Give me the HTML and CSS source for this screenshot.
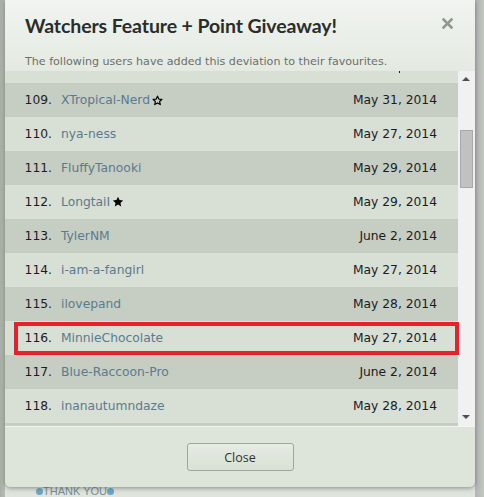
FILE: index.html
```html
<!DOCTYPE html>
<html>
<head>
<meta charset="utf-8">
<link rel="stylesheet" href="styles.css">
</head>
<body>
<div class="page">
  <div class="dialog">
    <div class="header">
      <h1 class="title">Watchers Feature + Point Giveaway!</h1>
      <svg class="close-x" width="11" height="11" viewBox="0 0 11 11"><path d="M1.5 1.5 L9.5 9.5 M9.5 1.5 L1.5 9.5" stroke="#8d9a8c" stroke-width="2.6" stroke-linecap="square"/></svg>
      <p class="subtitle">The following users have added this deviation to their favourites.</p>
    </div>
    <div class="list-wrap">
      <div class="list">
        <div class="row-top"><span class="comma"></span></div>
        <div class="row dark"><span class="num">109.</span><a class="name">XTropical-Nerd</a><svg class="star" width="11" height="11" viewBox="0 0 24 24"><path d="M12 2.5l2.9 6.3 6.9.7-5.2 4.6 1.5 6.8L12 17.4l-6.1 3.5 1.5-6.8-5.2-4.6 6.9-.7z" fill="none" stroke="#000" stroke-width="2.6" stroke-linejoin="round"/></svg><span class="date">May 31, 2014</span></div>
        <div class="row light"><span class="num">110.</span><a class="name">nya-ness</a><span class="date">May 27, 2014</span></div>
        <div class="row dark"><span class="num">111.</span><a class="name">FluffyTanooki</a><span class="date">May 29, 2014</span></div>
        <div class="row light"><span class="num">112.</span><a class="name">LongtaiI</a><svg class="star" width="12" height="12" viewBox="0 0 24 24"><path d="M12 1.5l3.1 6.6 7.2.8-5.4 4.9 1.6 7.1L12 17.2l-6.5 3.7 1.6-7.1-5.4-4.9 7.2-.8z" fill="#000"/></svg><span class="date">May 29, 2014</span></div>
        <div class="row dark"><span class="num">113.</span><a class="name">TylerNM</a><span class="date">June 2, 2014</span></div>
        <div class="row light"><span class="num">114.</span><a class="name">i-am-a-fangirl</a><span class="date">May 27, 2014</span></div>
        <div class="row dark"><span class="num">115.</span><a class="name">ilovepand</a><span class="date">May 28, 2014</span></div>
        <div class="row light"><span class="num">116.</span><a class="name">MinnieChocolate</a><span class="date">May 27, 2014</span></div>
        <div class="row dark"><span class="num">117.</span><a class="name">Blue-Raccoon-Pro</a><span class="date">June 2, 2014</span></div>
        <div class="row light"><span class="num">118.</span><a class="name">inanautumndaze</a><span class="date">May 28, 2014</span></div>
        <div class="row-bottom"></div>
      </div>
      <div class="scrollbar">
        <div class="arrow up"></div>
        <div class="track"><div class="thumb"></div></div>
        <div class="arrow down"></div>
      </div>
    </div>
    <div class="footer">
      <button class="btn">Close</button>
    </div>
    <div class="highlight"></div>
  </div>
  <div class="behind"><span class="dot"></span>THANK YOU<span class="dot"></span></div>
</div>
</body>
</html>
```

FILE: styles.css
```css
html, body {
  margin: 0;
  padding: 0;
}
body {
  background: #dfe4dd;
  width: 484px;
  height: 497px;
  overflow: hidden;
}
.page {
  padding-left: 5px;
  background: linear-gradient(to right, #a9b0a7 0, #b6bdb4 5px, transparent 5px, transparent 475px, #b3b2b8 475px, #c2c7c0 484px);
  height: 497px;
  position: relative;
}
.dialog {
  position: relative;
  width: 470px;
  height: 487px;
  border-radius: 0 0 6px 6px;
  background: #dee5db;
  box-shadow: 0 1px 5px rgba(60, 70, 60, 0.55);
  display: flex;
  flex-direction: column;
  overflow: hidden;
}
.header {
  height: 71px;
  flex: none;
  position: relative;
  background: linear-gradient(to bottom, #f1f4f0, #e4eae2);
  padding-left: 20px;
  box-sizing: border-box;
}
.title {
  margin: 0;
  padding-top: 14px;
  font-family: Lato, sans-serif;
  font-weight: 700;
  font-size: 19.5px;
  letter-spacing: -0.1px;
  line-height: 24px;
  color: #2a2d2a;
}
.close-x {
  position: absolute;
  right: 22px;
  top: 18px;
}
.subtitle {
  margin: 0;
  padding-top: 17px;
  font-family: "DejaVu Sans", Verdana, sans-serif;
  font-size: 11.1px;
  line-height: 13px;
  color: #6b6f6a;
}
.list-wrap {
  height: 355px;
  flex: none;
  display: flex;
}
.list {
  flex: 1;
  overflow: hidden;
  display: flex;
  flex-direction: column;
}
.row-top {
  height: 12px;
  flex: none;
  background: #d8dfd4;
  position: relative;
}
.comma {
  position: absolute;
  left: 394px;
  top: 0;
  width: 1px;
  height: 2px;
  background: #1b1b24;
}
.row-bottom {
  height: 3px;
  flex: none;
  background: #c6cdc2;
}
.row {
  height: 34px;
  flex: none;
  display: flex;
  align-items: center;
  padding: 0 21px 0 0;
  font-family: "DejaVu Sans", Verdana, sans-serif;
  font-size: 12.3px;
  color: #1b1b24;
}
.row.light { background: #d8dfd4; }
.row.dark { background: #c6cdc2; }
.num {
  width: 47px;
  text-align: right;
  flex: none;
}
.name {
  margin-left: 9px;
  color: #5a7b8f;
}
.star {
  margin-left: 2px;
}
.date {
  margin-left: auto;
}
.scrollbar {
  width: 17px;
  flex: none;
  background: #f1f1f1;
  display: flex;
  flex-direction: column;
}
.arrow {
  height: 17px;
  flex: none;
  position: relative;
}
.arrow::after {
  content: "";
  position: absolute;
  left: 4px;
  width: 0;
  height: 0;
  border-left: 4px solid transparent;
  border-right: 4px solid transparent;
}
.arrow.up::after {
  top: 6px;
  border-bottom: 4px solid #505050;
}
.arrow.down::after {
  top: 6px;
  border-top: 4px solid #505050;
}
.track {
  flex: 1;
  padding-top: 42px;
}
.thumb {
  margin-left: 2px;
  width: 11px;
  height: 56px;
  background: #c1c1c1;
  border: 1px solid #a8a8a8;
}
.footer {
  flex: 1;
  border-top: 1px solid #f3f5f2;
  display: flex;
  justify-content: center;
  align-items: flex-start;
  padding-top: 16px;
  background: #dde4da;
}
.btn {
  width: 107px;
  height: 28px;
  margin-left: 0;
  border: 1px solid #9ea79d;
  border-radius: 3px;
  background: linear-gradient(to bottom, #e6ebe3, #d9e0d6);
  font-family: "Open Sans", sans-serif;
  font-size: 12.5px;
  color: #2f3530;
  padding: 0;
}
.highlight {
  position: absolute;
  left: 9px;
  top: 322px;
  width: 445px;
  height: 33px;
  border: 4px solid #e8202a;
  box-sizing: border-box;
}
.behind {
  padding-left: 31px;
  margin-top: 0;
  font-family: "Liberation Sans", Arial, sans-serif;
  font-size: 11px;
  line-height: 9px;
  color: #7c8a94;
  display: flex;
  align-items: center;
}
.dot {
  width: 7px;
  height: 7px;
  border-radius: 50%;
  background: #6aa5c8;
  display: inline-block;
}
```
